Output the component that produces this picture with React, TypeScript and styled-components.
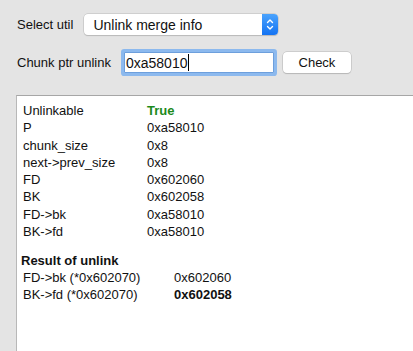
import { Fragment } from 'react';
import styled, { createGlobalStyle } from 'styled-components';

const GlobalStyle = createGlobalStyle`
  html, body {
    margin: 0;
    padding: 0;
    background: #e4e4e4;
    overflow: hidden;
  }

  body {
    font-family: "Liberation Sans", Arial, sans-serif;
    font-size: 13px;
    color: #111;
  }
`;

const Page = styled.div`
  width: 413px;
  height: 351px;
  padding: 14px 0 0 16px;
  box-sizing: border-box;
  display: flex;
  flex-direction: column;
`;

const FormRow = styled.div<{ $gapAfter: number }>`
  display: flex;
  align-items: center;
  gap: 8px;
  padding-left: 1px;
  margin-bottom: ${({ $gapAfter }) => $gapAfter}px;
`;

const Label = styled.span`
  font-size: 13px;
  line-height: 16px;
  margin-right: 3px;
`;

const Select = styled.div`
  position: relative;
  width: 194px;
  height: 21px;
  box-sizing: border-box;
  background: #fff;
  border-radius: 4px;
  box-shadow: 0 0 0 0.5px #b9b9b9, 0 1px 1px rgba(0, 0, 0, 0.18);
  display: flex;
  align-items: center;
  padding-left: 9px;
  font-size: 14px;
  overflow: hidden;
`;

const SelectArrows = styled.div`
  position: absolute;
  right: 0;
  top: 0;
  bottom: 0;
  width: 16px;
  background: linear-gradient(#4aa3fd, #1473f2);
  display: flex;
  align-items: center;
  justify-content: center;
`;

const FakeInput = styled.div`
  width: 150px;
  height: 21px;
  margin-left: 2px;
  box-sizing: border-box;
  background: #fff;
  border: 1px solid #6d9fdc;
  box-shadow: 0 0 0 3px #8cb9ee;
  border-radius: 1px;
  display: flex;
  align-items: center;
  padding-left: 1px;
  font-size: 14px;
`;

const Caret = styled.span`
  display: inline-block;
  width: 1px;
  height: 17px;
  background: #000;
  margin-left: 1px;
`;

const Button = styled.div`
  width: 68px;
  height: 21px;
  margin-left: 1px;
  box-sizing: border-box;
  background: #fff;
  border-radius: 4px;
  box-shadow: 0 0 0 0.5px #b5b5b5, 0 1px 1px rgba(0, 0, 0, 0.18);
  display: flex;
  align-items: center;
  justify-content: center;
  font-size: 13px;
`;

const Panel = styled.div`
  flex: 1;
  background: #fff;
  border-top: 1px solid #a6a6a6;
  border-left: 1px solid #b8b8b8;
  padding: 6px 0 0 6px;
`;

const InfoGrid = styled.div<{ $labelWidth: number }>`
  display: grid;
  grid-template-columns: ${({ $labelWidth }) => $labelWidth}px auto;
  justify-content: start;
  line-height: 17.25px;
  font-size: 13px;
`;

const Value = styled.span<{ $tone?: 'true' | 'bold' }>`
  font-weight: ${({ $tone }) => ($tone ? 700 : 400)};
  color: ${({ $tone }) => ($tone === 'true' ? '#1b8a1b' : 'inherit')};
`;

const ResultTitle = styled.div`
  font-weight: 700;
  font-size: 13px;
  line-height: 17px;
  margin: 12px 0 0 -2px;
`;

type Tone = 'true' | 'bold' | undefined;

const info: [string, string, Tone][] = [
  ['Unlinkable', 'True', 'true'],
  ['P', '0xa58010', undefined],
  ['chunk_size', '0x8', undefined],
  ['next->prev_size', '0x8', undefined],
  ['FD', '0x602060', undefined],
  ['BK', '0x602058', undefined],
  ['FD->bk', '0xa58010', undefined],
  ['BK->fd', '0xa58010', undefined],
];

const result: [string, string, Tone][] = [
  ['FD->bk (*0x602070)', '0x602060', undefined],
  ['BK->fd (*0x602070)', '0x602058', 'bold'],
];

function Arrows(): JSX.Element {
  return (
    <svg width="8" height="13" viewBox="0 0 8 13" fill="none" stroke="#fff" strokeWidth="1.4" strokeLinecap="round" strokeLinejoin="round">
      <path d="M1.5 4.5 L4 2 L6.5 4.5" />
      <path d="M1.5 8.5 L4 11 L6.5 8.5" />
    </svg>
  );
}

function Rows({ rows }: { rows: [string, string, Tone][] }): JSX.Element {
  return (
    <>
      {rows.map(([k, v, tone]) => (
        <Fragment key={k}>
          <span>{k}</span>
          <Value $tone={tone}>{v}</Value>
        </Fragment>
      ))}
    </>
  );
}

export default function App(): JSX.Element {
  return (
    <>
      <GlobalStyle />
      <Page>
        <FormRow $gapAfter={17}>
          <Label>Select util</Label>
          <Select>
            Unlink merge info
            <SelectArrows>
              <Arrows />
            </SelectArrows>
          </Select>
        </FormRow>
        <FormRow $gapAfter={22}>
          <Label>Chunk ptr unlink</Label>
          <FakeInput>
            0xa58010
            <Caret />
          </FakeInput>
          <Button>Check</Button>
        </FormRow>
        <Panel>
          <InfoGrid $labelWidth={124}>
            <Rows rows={info} />
          </InfoGrid>
          <ResultTitle>Result of unlink</ResultTitle>
          <InfoGrid $labelWidth={151}>
            <Rows rows={result} />
          </InfoGrid>
        </Panel>
      </Page>
    </>
  );
}
